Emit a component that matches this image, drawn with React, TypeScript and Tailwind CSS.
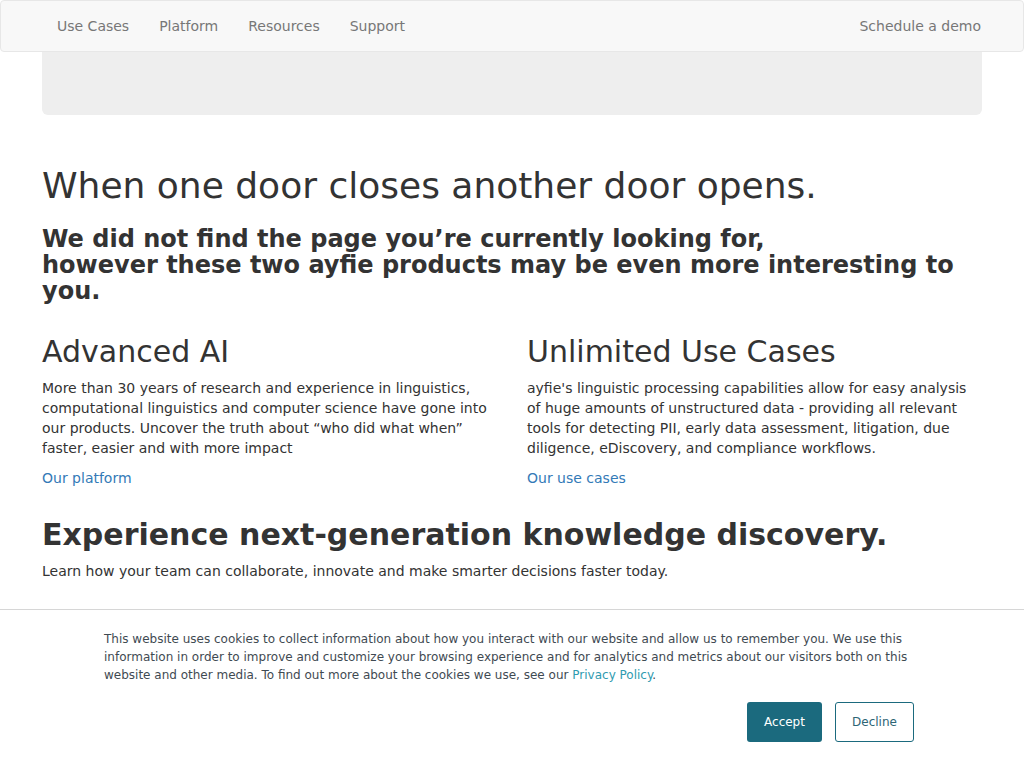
import React from 'react';

const sans = "font-['DejaVu_Sans','Liberation_Sans',sans-serif]";

const navLinks = ['Use Cases', 'Platform', 'Resources', 'Support'];

export default function App() {
  return (
    <div className={`min-h-screen bg-white text-[#333] ${sans}`}>
      {/* Navbar */}
      <nav className="h-[52px] bg-[#f8f8f8] border border-[#e7e7e7] rounded-[4px] flex items-center justify-between pl-[41px] pr-[42px]">
        <ul className="flex items-center">
          {navLinks.map(l => (
            <li key={l}>
              <a className="block px-[15px] text-[14px] leading-[20px] text-[#777]">{l}</a>
            </li>
          ))}
        </ul>
        <a className="block text-[14px] leading-[20px] text-[#777]">Schedule a demo</a>
      </nav>

      <div className="mx-[42px]">
        <div className="h-[63px] bg-[#eee] rounded-b-[6px]" />

        <h1 className="mt-[51px] text-[36px] leading-[40px] font-normal">
          When one door closes another door opens.
        </h1>
        <h3 className="mt-[20px] text-[24px] leading-[26px] font-bold">
          We did not find the page you’re currently looking for,
          <br />
          however these two ayfie products may be even more interesting to you.
        </h3>

        <div className="mt-[31px] grid grid-cols-2 gap-x-[30px]">
          <div>
            <h2 className="text-[30px] leading-[33px] font-normal">Advanced AI</h2>
            <p className="mt-[10px] text-[14px] leading-[20px]">
              More than 30 years of research and experience in linguistics, computational linguistics and computer science have gone into our products. Uncover the truth about “who did what when” faster, easier and with more impact
            </p>
            <a className="block mt-[10px] text-[14px] leading-[20px] text-[#337ab7]">Our platform</a>
          </div>
          <div>
            <h2 className="text-[30px] leading-[33px] font-normal">Unlimited Use Cases</h2>
            <p className="mt-[10px] text-[14px] leading-[20px]">
              ayfie's linguistic processing capabilities allow for easy analysis of huge amounts of unstructured data - providing all relevant tools for detecting PII, early data assessment, litigation, due diligence, eDiscovery, and compliance workflows.
            </p>
            <a className="block mt-[10px] text-[14px] leading-[20px] text-[#337ab7]">Our use cases</a>
          </div>
        </div>

        <h2 className="mt-[30px] text-[30px] leading-[33px] font-bold">
          Experience next-generation knowledge discovery.
        </h2>
        <p className="mt-[10px] text-[14px] leading-[20px]">
          Learn how your team can collaborate, innovate and make smarter decisions faster today.
        </p>
      </div>

      {/* Cookie banner */}
      <div className="fixed bottom-0 left-0 right-0 h-[159px] bg-white border-t border-[#d6d6d6]">
        <div className="ml-[104px] w-[810px] pt-[20px]">
          <p className="text-[12px] leading-[18px] text-[#3f4a52]">
            This website uses cookies to collect information about how you interact with our website and allow us to remember you. We use this information in order to improve and customize your browsing experience and for analytics and metrics about our visitors both on this website and other media. To find out more about the cookies we use, see our{' '}
            <a className="text-[#2f9bb0]">Privacy Policy</a>.
          </p>
          <div className="mt-[18px] flex justify-end gap-[13px]">
            <button className="w-[75px] h-[40px] rounded-[3px] bg-[#1b6a7e] text-white text-[12px]">Accept</button>
            <button className="w-[79px] h-[40px] rounded-[3px] border border-[#1b6a7e] bg-white text-[#2d6575] text-[12px]">Decline</button>
          </div>
        </div>
      </div>
    </div>
  );
}
